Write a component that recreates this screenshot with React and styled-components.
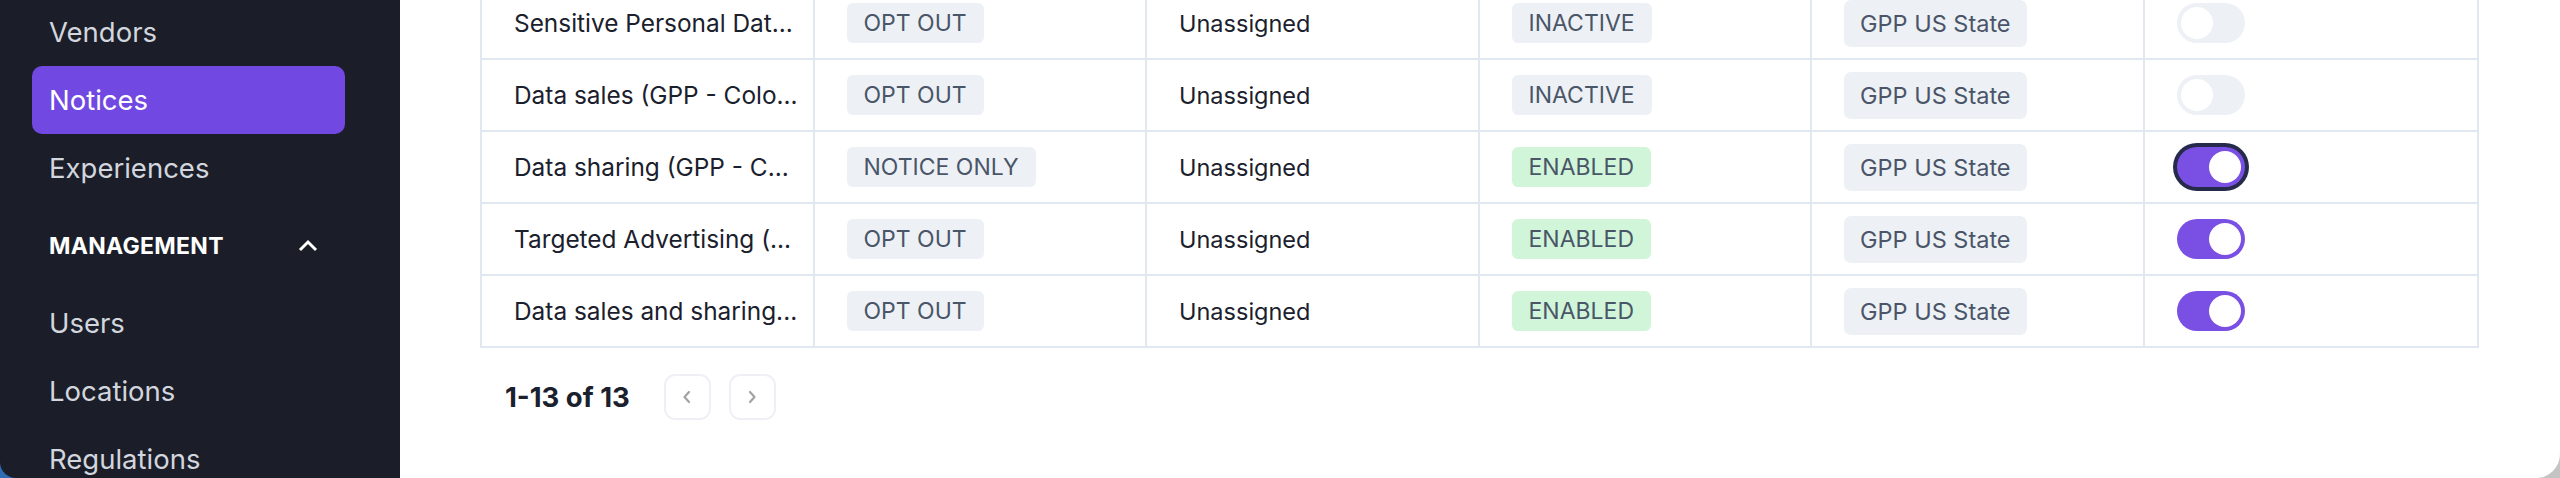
import React, { useState } from "react";
import styled, { createGlobalStyle } from "styled-components";

const GlobalStyle = createGlobalStyle`
  * { box-sizing: border-box; }
  html, body { margin: 0; padding: 0; height: 478px; overflow: hidden; }
  body {
    background: linear-gradient(90deg, #2d6cb3 0%, #7d8ea3 50%, #c4c4c4 100%);
    font-family: Inter, "Noto Sans", sans-serif;
  }
`;

const Window = styled.div`
  display: flex;
  height: 478px;
  border-radius: 0 0 24px 16px;
  overflow: hidden;
`;

const Sidebar = styled.nav`
  width: 400px;
  flex-shrink: 0;
  background: #1b1e28;
  padding: 0 55px 0 32px;
  overflow: hidden;
`;

const NavList = styled.div`
  display: flex;
  flex-direction: column;
  margin-top: -2px;
`;

const NavItem = styled.a`
  display: flex;
  align-items: center;
  height: 68px;
  padding-left: 17px;
  border-radius: 10px;
  font-size: 27.5px;
  color: ${(p) => (p.$active ? "#ffffff" : "#d2d6de")};
  background: ${(p) => (p.$active ? "#7148e1" : "transparent")};
  cursor: pointer;
`;

const GroupHeader = styled.div`
  display: flex;
  align-items: center;
  justify-content: space-between;
  height: 87px;
  padding: 0 27px 0 17px;
  font-size: 23px;
  font-weight: 700;
  color: #ffffff;
  letter-spacing: 0.3px;
`;

const Main = styled.main`
  flex: 1;
  background: #ffffff;
  padding: 0 81px 0 80px;
  overflow: hidden;
`;

const Table = styled.div`
  margin-top: -12px;
  border-left: 2px solid #e2e8f0;
  border-right: 2px solid #e2e8f0;
`;

const Row = styled.div`
  display: grid;
  grid-template-columns: repeat(6, 1fr);
  height: 72px;
  border-bottom: 2px solid #e2e8f0;
`;

const Cell = styled.div`
  display: flex;
  align-items: center;
  min-width: 0;
  padding: 0 8px 0 32px;
  border-right: 2px solid #e2e8f0;
  font-size: ${(p) => (p.$name ? "24.4px" : "23.5px")};
  color: #1a202c;
  white-space: nowrap;
  overflow: hidden;

  &:last-child {
    border-right: none;
  }
`;

const Badge = styled.span`
  display: inline-flex;
  align-items: center;
  height: 40px;
  padding: 0 17px;
  border-radius: 6px;
  font-size: 23px;
  color: #4a5568;
  background: ${(p) => (p.$tone === "green" ? "#d0f5d9" : "#edf1f6")};
`;

const Tag = styled.span`
  display: inline-flex;
  align-items: center;
  height: 47px;
  padding: 0 16px;
  border-radius: 7px;
  font-size: 23.5px;
  color: #4a5568;
  background: #edf1f6;
`;

const Track = styled.button`
  width: 68px;
  height: 40px;
  padding: 4px;
  border: none;
  border-radius: 20px;
  background: ${(p) => (p.$on ? "#7a50e4" : "#edf0f5")};
  box-shadow: ${(p) => (p.$focus ? "0 0 0 4px #262a4b" : "none")};
  cursor: pointer;
  display: flex;
  align-items: center;
`;

const Thumb = styled.span`
  width: 32px;
  height: 32px;
  border-radius: 50%;
  background: #ffffff;
  transform: translateX(${(p) => (p.$on ? "28px" : "0")});
`;

const Pagination = styled.div`
  display: flex;
  align-items: center;
  margin-top: 26px;
  padding-left: 25px;
`;

const PageInfo = styled.span`
  font-size: 27.5px;
  font-weight: 700;
  color: #1a202c;
  margin-right: 34px;
`;

const PageButton = styled.button`
  width: 47px;
  height: 46px;
  margin-right: 18px;
  border: 2px solid #eef0f6;
  border-radius: 11px;
  background: #ffffff;
  display: flex;
  align-items: center;
  justify-content: center;
  padding: 0;
`;

const Chevron = ({ dir }) => (
  <svg width="10" height="14" viewBox="0 0 10 14">
    <polyline
      points={dir === "left" ? "7,2 2.5,7 7,12" : "3,2 7.5,7 3,12"}
      fill="none"
      stroke="#a3a3a3"
      strokeWidth="2.2"
      strokeLinecap="round"
      strokeLinejoin="round"
    />
  </svg>
);

const notices = [
  { name: "Sensitive Personal Dat...", mech: "OPT OUT", status: "INACTIVE", on: false },
  { name: "Data sales (GPP - Colo...", mech: "OPT OUT", status: "INACTIVE", on: false },
  { name: "Data sharing (GPP - C...", mech: "NOTICE ONLY", status: "ENABLED", on: true, focus: true },
  { name: "Targeted Advertising (...", mech: "OPT OUT", status: "ENABLED", on: true },
  { name: "Data sales and sharing...", mech: "OPT OUT", status: "ENABLED", on: true },
];

const Toggle = ({ initial, focus }) => {
  const [on, setOn] = useState(initial);
  return (
    <Track $on={on} $focus={focus} onClick={() => setOn(!on)}>
      <Thumb $on={on} />
    </Track>
  );
};

const App = () => {
  return (
    <>
      <GlobalStyle />
      <Window>
        <Sidebar>
          <NavList>
            <NavItem>Vendors</NavItem>
            <NavItem $active>Notices</NavItem>
            <NavItem>Experiences</NavItem>
            <GroupHeader>
              MANAGEMENT
              <svg width="20" height="13" viewBox="0 0 20 13">
                <polyline points="2,11 10,3 18,11" fill="none" stroke="#fff" strokeWidth="3" />
              </svg>
            </GroupHeader>
            <NavItem>Users</NavItem>
            <NavItem>Locations</NavItem>
            <NavItem>Regulations</NavItem>
          </NavList>
        </Sidebar>
        <Main>
          <Table>
            {notices.map((n) => (
              <Row key={n.name}>
                <Cell $name>{n.name}</Cell>
                <Cell>
                  <Badge>{n.mech}</Badge>
                </Cell>
                <Cell>Unassigned</Cell>
                <Cell>
                  <Badge $tone={n.status === "ENABLED" ? "green" : "gray"}>{n.status}</Badge>
                </Cell>
                <Cell>
                  <Tag>GPP US State</Tag>
                </Cell>
                <Cell>
                  <Toggle initial={n.on} focus={n.focus} />
                </Cell>
              </Row>
            ))}
          </Table>
          <Pagination>
            <PageInfo>1-13 of 13</PageInfo>
            <PageButton>
              <Chevron dir="left" />
            </PageButton>
            <PageButton>
              <Chevron dir="right" />
            </PageButton>
          </Pagination>
        </Main>
      </Window>
    </>
  );
};

export default App;
